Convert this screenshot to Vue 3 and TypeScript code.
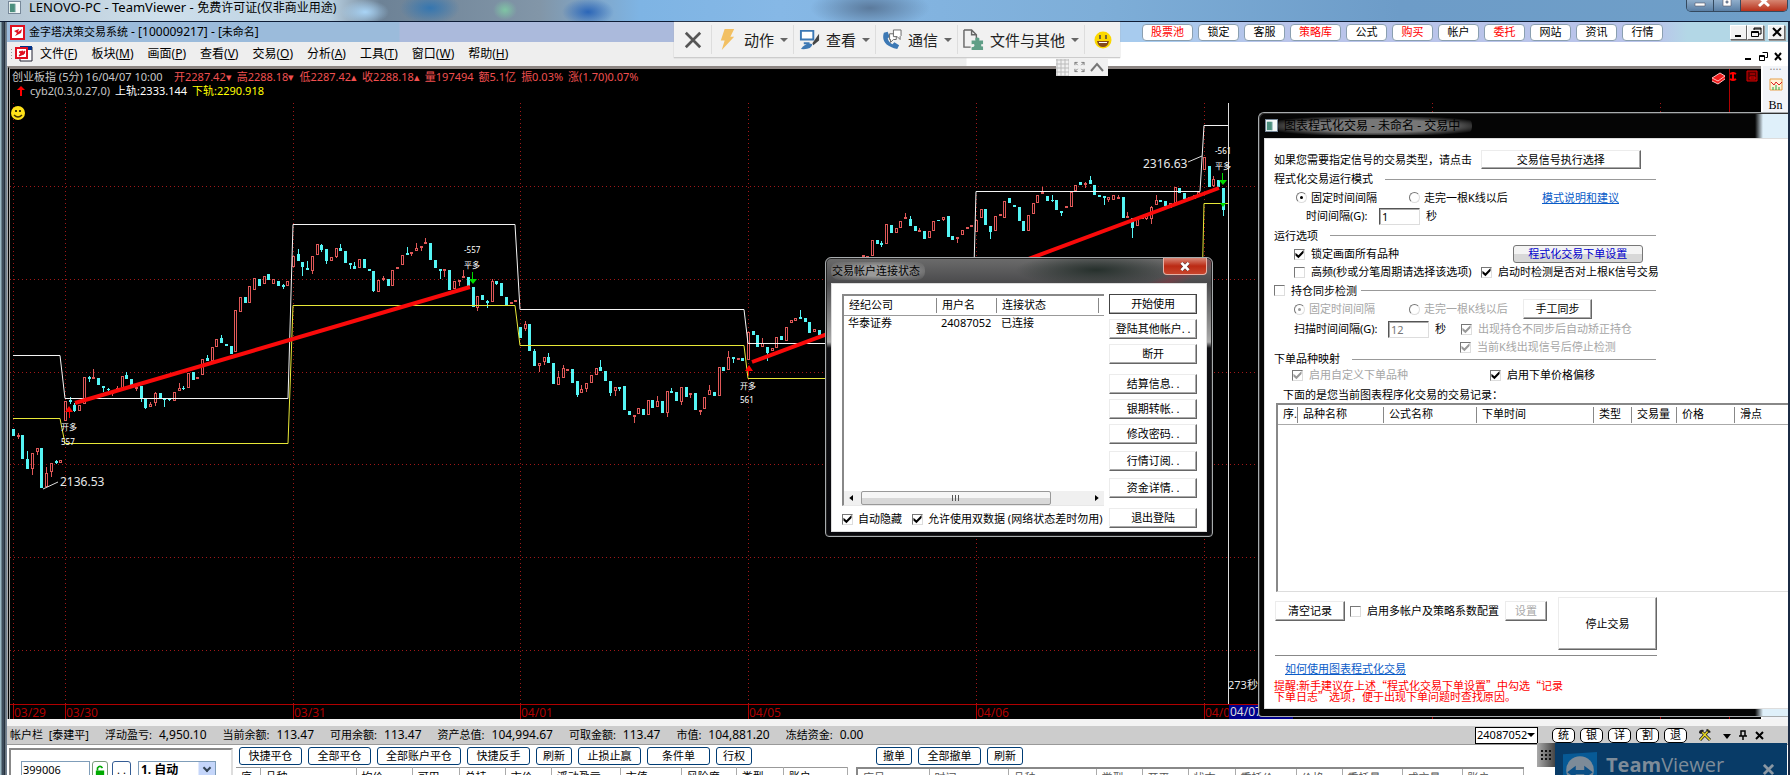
<script setup lang="ts">
import { ref } from 'vue'

const menus = [
  ['文件', 'F'], ['板块', 'M'], ['画面', 'P'], ['查看', 'V'], ['交易', 'O'],
  ['分析', 'A'], ['工具', 'T'], ['窗口', 'W'], ['帮助', 'H'],
]

const quickLinks = [
  { text: '股票池', hot: true }, { text: '锁定' }, { text: '客服' }, { text: '策略库', hot: true },
  { text: '公式' }, { text: '购买', hot: true }, { text: '帐户' }, { text: '委托', hot: true },
  { text: '网站' }, { text: '资讯' }, { text: '行情' },
]

const quotes = ['开2287.42▾', '高2288.18▾', '低2287.42▴', '收2288.18▴', '量197494', '额5.1亿', '振0.03%', '涨(1.70)0.07%']

const funds = [
  ['浮动盈亏:', '4,950.10'], ['当前余额:', '113.47'], ['可用余额:', '113.47'], ['资产总值:', '104,994.67'],
  ['可取金额:', '113.47'], ['市值:', '104,881.20'], ['冻结资金:', '0.00'],
]

const orderButtons = ['快捷平仓', '全部平仓', '全部账户平仓', '快捷反手', '刷新', '止损止赢', '条件单', '行权']
const positionCols = [
  ['序', 24], ['品种', 96], ['均价', 56], ['可用', 47], ['总持', 46], ['市价', 46],
  ['浮动盈亏', 69], ['市值', 61], ['风险度', 55], ['类型', 47], ['账户', 64],
] as [string, number][]
const orderCols = [
  ['序号', 72], ['时间', 79], ['品种', 88], ['类型', 46], ['开平', 46], ['状态', 47],
  ['委托价', 61], ['价格', 46], ['委托量', 60], ['成交量', 60], ['账户', 61],
] as [string, number][]

const recordCols = [
  ['序.', 20], ['品种名称', 86], ['公式名称', 93], ['下单时间', 117],
  ['类型', 38], ['交易量', 45], ['价格', 58], ['滑点', 55],
] as [string, number][]

const accountButtons = [
  { text: '开始使用', gap: 'none', main: true }, { text: '登陆其他帐户. .', gap: 'near' }, { text: '断开', gap: 'near' },
  { text: '结算信息. .', gap: 'far' }, { text: '银期转帐. .', gap: 'near' }, { text: '修改密码. .', gap: 'near' },
  { text: '行情订阅. .', gap: 'mid' }, { text: '资金详情. .', gap: 'mid' }, { text: '退出登陆', gap: 'far' },
]

const runMode = ref('fixed')
const syncMode = ref('fixed')
const interval = ref('1')
const scanInterval = ref('12')
const code = ref('399006')

interface Candle { x: number; up: boolean; top: number; bottom: number; high: number; low: number }

/* Each entry: u|d (rise or fall), body top, body bottom, and optionally wick top, wick bottom. */
const sessions: { x: number; from?: number; bars: string }[] = [
  { x: 13, bars: 'd 429 436,u 435 437 433 439,d 435 459,d 459 469 451 469,u 453 469 453 475,u 448 452 448 455,d 448 488,u 473 487 467 487,u 463 472 463 477,d 461 463 460 464,u 460 463' },
  { x: 65, bars: 'u 401 421,d 400 402 397 404,d 405 411 403 412,u 405 411,u 377 404,d 377 379 376 382,u 377 379 369 379,d 378 385,d 386 388 386 392,d 389 390 388 391,u 391 394 391 396,u 388 390 386 392,u 376 388,d 375 379 372 379,d 379 385,u 387 389 386 391,d 386 398 386 402,d 398 408 398 409,u 404 407 402 407,u 393 403 392 406,d 393 399,d 399 400 398 407,d 399 400 399 401,u 392 401,u 388 391 383 391,d 388 389 386 390,u 373 388,d 372 380,u 377 379,u 359 375,d 358 361 355 361,u 347 361,u 339 347,d 338 343 335 343,d 344 346,d 346 354,u 310 352,u 297 312,d 297 303,u 286 303,u 278 290,d 279 286,u 276 284,d 274 280,u 279 284,d 281 286,d 285 287 284 289,u 281 286' },
  { x: 293, bars: 'u 256 267,d 254 261 249 261,d 262 267 262 276,d 268 270 261 270,u 256 271 256 274,u 244 255,d 245 250 244 252,d 249 261 249 264,u 257 261,u 248 257 248 258,d 248 251 244 251,d 251 263,d 263 265 263 269,d 266 269 262 269,u 259 268,d 259 268,d 269 271,d 271 291 271 292,u 280 292,u 278 280 276 281,d 279 286,u 270 286,u 267 268,u 255 265,d 253 255 247 255,u 252 253 252 256,u 248 251 243 251,u 246 248 246 251,u 242 244 238 244,d 243 260,d 260 268,d 269 271 269 279,u 269 271 269 277,d 270 290,u 281 289,u 280 282 280 286,u 276 278 270 278,d 277 286,d 287 307,u 296 308 296 311,d 295 300,d 301 303 300 308,u 281 302 279 302,d 281 284 281 285,d 283 296,d 297 305,u 302 304,u 300 302' },
  { x: 520, bars: 'd 327 338,u 324 329 321 331,d 324 351,d 351 366 349 366,u 363 366 363 372,u 357 362 357 365,d 357 363 353 363,d 363 384,u 377 385 371 385,u 368 378 365 378,u 369 370,d 369 383,d 381 395 381 397,u 389 393 385 393,u 383 389 383 392,u 375 383,u 368 375,d 367 371 360 371,d 371 381,d 381 393 381 396,u 387 391 387 396,d 387 389 387 391,d 386 410,d 411 415,u 415 416 415 423,u 408 414,d 409 415,u 400 415,d 400 408,u 401 407 396 407,d 401 413,u 391 413 391 417,d 391 393 388 393,d 392 401,u 387 402 387 405,d 387 397,u 393 395 393 398,d 393 410,u 410 411 410 415,u 397 409,u 390 395 385 395,d 392 396,u 367 396,d 367 371,u 357 370 351 370,d 357 359 357 363,u 358 359,d 358 361' },
  { x: 748, bars: 'u 332 360,d 331 335,d 335 347,u 343 347 338 347,d 347 353 347 361,u 348 351,u 337 348,d 336 340,u 327 341,u 320 323,u 318 321,d 317 319 310 319,d 318 322,d 322 333,u 329 332,d 330 335' },
  { x: 749, from: 24, bars: 'u 255 257,u 256 258,u 240 256,d 240 244,d 243 245 241 247,u 224 244,d 225 233,u 228 233,u 221 228,u 217 219 213 219,d 219 226 216 226,d 226 231,u 230 232 228 232,d 231 239,u 231 238,u 221 231,d 220 221,u 217 220 217 221,d 216 237,d 236 240,u 237 239 237 243,u 230 235,u 227 229,u 225 226' },
  { x: 976, bars: 'u 220 232,u 209 218,d 209 225,d 226 232 226 239,u 216 231,u 214 216,u 201 218,d 198 203,d 205 207,d 207 221,d 221 231,u 215 231,u 203 214,u 195 203,u 192 194 187 194,d 196 201,d 200 201 195 202,d 200 210,d 211 213 211 216,u 206 208,u 192 207,u 185 191,d 182 185,u 183 184 182 188,d 180 184 176 184,d 185 195,d 195 197,d 196 198 196 205,u 197 200 197 202,u 195 200,u 197 199 195 199,d 197 218,u 216 218 212 218,d 218 228 218 238,u 219 226,u 216 219,u 216 219 213 220,u 207 219 206 224,u 200 205 195 205,d 200 202,d 201 206,u 203 208,u 187 203,d 188 193,d 193 199,u 197 200,u 195 199,u 192 195' },
  { x: 1204, bars: 'u 157 170,d 166 187,u 179 186 176 187,d 180 187,d 188 210 188 216' },
]

const candles: Candle[] = sessions.flatMap(({ x, from = 0, bars }) =>
  bars.split(',').map((bar, i) => {
    const [kind, ...n] = bar.split(' ')
    const [top, bottom, high = top, low = bottom] = n.map(Number)
    return { x: Math.round(x + (from + i) * 4.73), up: kind === 'u', top, bottom, high, low }
  }),
)

const days = [
  { x: 13, text: '03/29' }, { x: 65, text: '03/30' }, { x: 293, text: '03/31' }, { x: 520, text: '04/01' },
  { x: 748, text: '04/05' }, { x: 976, text: '04/06' }, { x: 1204, text: '04/07' }, { x: 1432, text: '04/08' }, { x: 1660, text: '04/11' },
]
const levels = [186, 279, 372, 464, 557, 650]
</script>

<template>
  <div class="desktop">
    <header class="remote-title">
      <svg class="win-icon" viewBox="0 0 13 13"><path d="M0 0h13v13H0z" fill="#f4f8f8" /><path d="M1 2h6v10H1z" fill="#4b8f7d" /><path d="M7 2h1v10H7z" fill="#9bb" /></svg>
      <span class="remote-name"><span class="host">LENOVO-PC - TeamViewer - </span>免费许可证(仅非商业用途)</span>
      <div class="aero-buttons">
        <button type="button" aria-label="最小化"><svg viewBox="0 0 12 8"><path d="M1 3h10v3H1z" fill="#fff" stroke="#556" stroke-width=".6" /></svg></button>
        <button type="button" aria-label="最大化"><svg viewBox="0 0 12 8"><path d="M2-3h8v9H2zM5 1h2v2H5z" fill="#fff" fill-rule="evenodd" stroke="#556" stroke-width=".6" /></svg></button>
        <button type="button" class="aero-close" aria-label="关闭"><svg viewBox="0 0 12 8"><path d="M1-3l10 9M11-3L1 6" stroke="#fff" stroke-width="3" /></svg></button>
      </div>
    </header>

    <div class="workspace">
      <div class="app-title">
        <svg class="app-icon" viewBox="0 0 15 15"><path d="M1 1h13v13H1z" fill="#fff" stroke="#e01020" stroke-width="2" /><path d="M4 6l5-2-1 3 4-3-1 4-6 3 2-3z" fill="#e01020" /></svg>
        <span>金字塔决策交易系统<span class="latin"> - [100009217] - [</span>未命名<span class="latin">]</span></span>
        <nav class="quick">
          <button v-for="q in quickLinks" :key="q.text" type="button" :class="{ hot: q.hot, long: q.text.length > 2 }">{{ q.text }}</button>
        </nav>
        <div class="classic-buttons">
          <button type="button" aria-label="最小化"><svg viewBox="0 0 12 11"><path d="M2 8h6v2H2z" /></svg></button>
          <button type="button" aria-label="还原"><svg viewBox="0 0 12 11"><path d="M4 1h7v6H9M4 1v2M4 2h7M1.500 4.500h7v5h-7zM1.500 5.500h7" fill="none" stroke="#000" /></svg></button>
          <button type="button" class="gap" aria-label="关闭"><svg viewBox="0 0 12 11"><path d="M2 1l8 8M10 1L2 9" stroke="#000" stroke-width="2" /></svg></button>
        </div>
      </div>

      <div class="menubar">
        <svg class="mdi-icon" viewBox="0 0 22 16"><path d="M0 3h1v1H0zM0 6h1v1H0zM0 9h1v1H0zM0 12h1v1H0z" fill="#999" /><path d="M9 1h12v14H9z" fill="#fff" stroke="#223" /><path d="M9 0h12v4H9z" fill="#003087" /><path d="M5 2h11v10H5z" fill="#fff" stroke="#e01020" stroke-width="2" /><path d="M8 6l4-1-1 2 3-2-1 3-5 2 2-3z" fill="#e01020" stroke="#e01020" /></svg>
        <button v-for="m in menus" :key="m[1]" type="button" class="menu">{{ m[0] }}(<u>{{ m[1] }}</u>)</button>
        <div class="mdi-buttons">
          <button type="button" aria-label="最小化"><svg viewBox="0 0 9 9"><path d="M1 6h6v2H1z" /></svg></button>
          <button type="button" aria-label="还原"><svg viewBox="0 0 9 9"><path d="M3.500.5h5v5h-2M.5 3.500h5v5h-5zM.5 4.500h5" fill="none" stroke="#000" /></svg></button>
          <button type="button" aria-label="关闭"><svg viewBox="0 0 9 9"><path d="M1 1l6 7M7 1L1 8" stroke="#000" stroke-width="2" /></svg></button>
        </div>
      </div>

      <div class="stage">
        <section class="chart">
          <svg class="plot" width="100%" height="100%">
            <g transform="translate(-10 -69)">
              <g class="grid">
                <line v-for="d in days" :key="d.x" :x1="d.x + 0.5" :x2="d.x + 0.5" y1="103" y2="704" />
                <line v-for="y in levels" :key="y" x1="10" x2="1729" :y1="y + 0.5" :y2="y + 0.5" />
              </g>
              <path class="axis" d="M10 704.500H1763M1729.500 69V719" />
              <g class="dates">
                <template v-for="d in days" :key="d.x">
                  <path :d="`M${d.x + 0.5} 704V719`" />
                  <text :x="d.x + 1" y="717">{{ d.text }}</text>
                </template>
                <text x="1733" y="717">1:05</text>
              </g>
              <g v-for="(c, i) in candles" :key="i" :class="c.up ? 'rise' : 'fall'">
                <line :x1="c.x + 0.5" :x2="c.x + 0.5" :y1="c.high" :y2="c.low" />
                <rect :x="c.up ? c.x - 0.5 : c.x - 1" :y="c.up ? c.top + 0.5 : c.top" :width="c.up ? 2 : 3" :height="Math.max(1, c.bottom - c.top - (c.up ? 1 : 0))" />
              </g>
              <path class="upper" d="M13 355.500H60L65 398.500H288L293 224.500H515L520 309.500H744L748 343.500H972L976 191.500H1200L1204 125.500H1228" />
              <path class="lower" d="M13 418.500H60L65 443.500H288L293 305.500H515L520 345.500H744L748 378.500H972L1200 378L1204 203.500H1228" />
              <path class="trend" d="M75 403L470 287M752 362L1219 188" />
              <path d="M69 406l-4 6h8zM69.500 411v7M749 365l-4 6h8z" fill="#f00" />
              <path d="M69.500 411v7M748.500 371v4" stroke="#f00" />
              <path d="M473 284l-4-5h8zM1223 185l-4-5h8zM1223 207l-3-4h6z" fill="#0d0" />
              <path d="M472.500 279v-7M1222.500 180v-7" stroke="#0d0" />
              <path class="leader" d="M43 489l15-7M1188 162l14-6" />
              <path class="cursor" d="M1228.500 103V704" />
              <g class="tags">
                <text x="61" y="430">开多</text><text x="61" y="445">557</text>
                <text x="464" y="253">-557</text><text x="464" y="268">平多</text>
                <text x="740" y="389">开多</text><text x="740" y="403">561</text>
                <text x="1215" y="154">-561</text><text x="1215" y="169">平多</text>
              </g>
              <g class="values">
                <text x="60" y="486">2136.53</text><text x="1143" y="168">2316.63</text><text x="1228" y="689" class="secs">273秒</text>
              </g>
              <path d="M1229 705h64v14h-64z" fill="#00008c" />
              <text x="1230" y="716" class="cursor-date">04/07</text>
              <g><circle cx="18" cy="113" r="7" fill="#ffe21a" /><circle cx="16" cy="111" r="1" /><circle cx="20" cy="111" r="1" /><path d="M14 115q4 4 8 0" fill="none" stroke="#430" stroke-width="1.500" /></g>
              <path d="M1712 78l8-5 5 3v3l-7 5-6-3z" fill="#f21c1c" /><path d="M1712 78l8-5 5 3-7 5zM1712 81l6 3 7-5" fill="none" stroke="#fbb" />
              <path d="M1733 72v9M1730 74q3-2 6 0M1730 79q3 2 6 0" fill="none" stroke="#f00" stroke-width="2" />
              <path d="M1747 71h10v10h-10zM1750 74h5M1750 77h5v2h-5z" fill="#500" stroke="#d00" />
            </g>
          </svg>
          <p class="quote-line"><span class="grey lead">创业板指 (5分) 16/04/07 10:00</span><span v-for="q in quotes" :key="q" class="red">{{ q }}</span></p>
          <p class="quote-line second">
            <svg viewBox="0 0 8 10"><path d="M4 0l4 4H5v6H3V4H0z" fill="#f00" /></svg>
            <span class="grey">cyb2(0.3,0.27,0)</span><span class="white">上轨:2333.144</span><span class="yellow">下轨:2290.918</span>
          </p>
        </section>
        <aside class="sidebar">
          <span class="dots">....</span>
          <svg viewBox="0 0 14 14"><path d="M1 1h12v11H1z" fill="#fff3d8" stroke="#e8a04a" /><path d="M2 4l3 3 2-3 3 3 3-3" fill="none" stroke="#d22" /><path d="M4 12V9M7 12V7M10 12V9" stroke="#2a4" /></svg>
          <span class="bn">Bn</span>
        </aside>
      </div>

      <div class="account-bar">
        <span class="owner">帐户栏&nbsp; [泰建平]</span>
        <span v-for="f in funds" :key="f[0]" class="fund"><span>{{ f[0] }}</span><span class="latin">{{ f[1] }}</span></span>
        <div class="account-tools">
          <span class="drop account-drop"><select class="account-select" aria-label="资金帐号"><option>24087052</option></select></span>
          <button v-for="t in ['统', '银', '详', '割', '退']" :key="t" type="button" class="pill">{{ t }}</button>
          <svg class="tools" viewBox="0 0 14 14"><path d="M2 12L11 2M3 3l9 9" stroke="#222" stroke-width="3" /><path d="M2 12L11 2M3 3l9 9" stroke="#e8d820" stroke-width="1.500" /><path d="M1 5q0-4 5-3L3 6zM9 1l4 3-2 1-3-3z" fill="#222" /></svg>
          <svg class="small" viewBox="0 0 10 10"><path d="M1 4h8L5 9z" /></svg>
          <svg class="small" viewBox="0 0 10 10"><path d="M3 1h4v5H3zM1 6h8M5 6v4" fill="none" stroke="#000" stroke-width="1.500" /></svg>
          <svg class="small" viewBox="0 0 10 10"><path d="M2 2l7 7M9 2L2 9" stroke="#000" stroke-width="2" /></svg>
        </div>
      </div>

      <div class="trade">
        <form class="ticket">
          <input v-model="code" class="code" aria-label="代码">
          <button type="button" class="lock" aria-label="锁定"><svg viewBox="0 0 12 14"><path d="M3 7V4q3-4 6 0" fill="none" stroke="#0a0" stroke-width="2" /><path d="M1 7h10v7H1z" fill="#0a0" /></svg></button>
          <button type="button" class="more">. .</button>
          <span class="drop mode-drop"><select class="mode" aria-label="开平方式"><option>1. 自动</option></select></span>
        </form>
        <div class="pane">
          <div class="pane-buttons"><button v-for="b in orderButtons" :key="b" type="button" class="xp" :class="{ wide: b.length > 2 }">{{ b }}</button></div>
          <table class="list"><colgroup><col v-for="c in positionCols" :key="c[0]" :style="{ width: c[1] + 'px' }"></colgroup>
            <thead><tr><th v-for="c in positionCols" :key="c[0]">{{ c[0] }}</th></tr></thead></table>
        </div>
        <div class="pane orders">
          <div class="pane-buttons"><button v-for="b in ['撤单', '全部撤单', '刷新']" :key="b" type="button" class="xp" :class="{ wide: b.length > 2 }">{{ b }}</button></div>
          <table class="list sunk"><colgroup><col v-for="c in orderCols" :key="c[0]" :style="{ width: c[1] + 'px' }"></colgroup>
            <thead><tr><th v-for="c in orderCols" :key="c[0]">{{ c[0] }}</th></tr></thead></table>
        </div>
      </div>
    </div>

    <div class="tv-bar">
      <div class="tv-main">
        <button type="button" class="tv-x" aria-label="关闭连接"><svg viewBox="0 0 20 20"><path d="M2 2l16 16M18 2L2 18" stroke="#555" stroke-width="3" /></svg></button>
        <button type="button"><svg viewBox="0 0 20 22"><path d="M7 0h10l-4 8h4L4 22l3-10H3z" fill="#f2c063" /></svg>动作<i /></button>
        <button type="button"><svg viewBox="0 0 22 22"><path d="M2 2h13v9H2zM5 15h6" fill="#fff" stroke="#3c78b4" stroke-width="2" /><path d="M21 5v7l-6 5-1-2z" fill="#444" /><path d="M2 21q6-8 12-5-1 6-12 5z" fill="#3c78b4" /></svg>查看<i /></button>
        <button type="button"><svg viewBox="0 0 22 22"><path d="M3 4q-4 13 14 17l2-4-5-3-2 2q-4-2-5-6l2-2-2-5z" fill="#3c78b4" /><path d="M13 1h8v6l-1 1v3l-3-3h-4zM9 5h4M9 5v6h1v3l3-3h3V8" fill="#fff" stroke="#666" /></svg>通信<i /></button>
        <button type="button" class="tv-files"><svg viewBox="0 0 22 22"><path d="M1 1h8l5 5v4M1 1v18h7M9 1v5h5" fill="none" stroke="#666" stroke-width="1.500" /><path d="M9 12h4q-1-3 2-3t2 3h4v4q-2-1-2 1t2 1v4H9v-3q3 0 3-2t-3-1z" fill="#5f9e87" /></svg>文件与其他<i /></button>
        <button type="button" class="smile" aria-label="反馈"><svg viewBox="0 0 18 18"><circle cx="9" cy="9" r="8.500" fill="#fbd800" /><path d="M6 4v4M12 4v4" stroke="#763" stroke-width="2" /><path d="M3 10h12q-1 6-6 6t-6-6z" fill="#854a1c" /><path d="M5 11h8v1H5z" fill="#fff" /></svg></button>
      </div>
      <div class="tv-tab">
        <svg class="tv-grid" viewBox="0 0 13 17"><path d="M0 1h13M0 5h13M0 9h13M0 13h13M0 17h13M1 0v17M5 0v17M9 0v17M13 0v17" stroke="#bbb" /></svg>
        <button type="button" aria-label="全屏"><svg viewBox="0 0 12 12"><path d="M1 4V1h3M8 1h3v3M11 8v3H8M4 11H1V8M1 1l3 3M11 1L8 4M11 11L8 8M1 11l3-3" fill="none" stroke="#777" /></svg></button>
        <button type="button" aria-label="收起"><svg class="up" viewBox="0 0 14 12"><path d="M1 10l6-7 6 7" fill="none" stroke="#777" stroke-width="2" /></svg></button>
      </div>
    </div>

    <section class="window account-window" aria-label="交易帐户连接状态">
      <header class="window-title"><span class="glow">交易帐户连接状态</span>
        <button type="button" class="close" aria-label="关闭"><svg viewBox="0 0 12 10"><path d="M2 1l8 8M10 1L2 9" stroke="#533" stroke-width="4" /><path d="M2 1l8 8M10 1L2 9" stroke="#fff" stroke-width="3" /></svg></button>
      </header>
      <div class="client account-client">
        <div class="account-left">
          <div class="account-list">
            <table>
              <colgroup><col class="c1"><col class="c2"><col class="c3"><col></colgroup>
              <thead><tr><th>经纪公司</th><th>用户名</th><th>连接状态</th><th class="rest" /></tr></thead>
              <tbody><tr><td>华泰证券</td><td>24087052</td><td>已连接</td><td /></tr></tbody>
            </table>
            <div class="scroll">
              <svg viewBox="0 0 6 8"><path d="M5 0v8L0 4z" /></svg><span class="thumb"><b /><b /><b /></span><svg viewBox="0 0 6 8"><path d="M1 0v8l5-4z" /></svg>
            </div>
          </div>
          <div class="checks">
            <label class="opt"><input type="checkbox" checked>自动隐藏</label>
            <label class="opt"><input type="checkbox" checked>允许使用双数据 (网络状态差时勿用)</label>
          </div>
        </div>
        <div class="account-actions">
          <button v-for="b in accountButtons" :key="b.text" type="button" class="btn" :class="[b.gap, { main: b.main }]">{{ b.text }}</button>
        </div>
      </div>
    </section>

    <section class="window program-window" aria-label="图表程式化交易">
      <header class="window-title">
        <svg class="win-icon" viewBox="0 0 13 13"><path d="M0 0h13v13H0z" fill="#f4f8f8" /><path d="M1 2h6v10H1z" fill="#4b8f7d" /><path d="M7 2h1v10H7z" fill="#9bb" /></svg>
        <span class="glow">图表程式化交易 - 未命名 - 交易中</span>
      </header>
      <div class="client program-client">
        <div class="form">
          <div class="row r-type"><span>如果您需要指定信号的交易类型，请点击</span><button type="button" class="btn">交易信号执行选择</button></div>
          <h3 class="row r-head"><span>程式化交易运行模式</span><hr></h3>
          <div class="row r-mode">
            <label class="opt"><input v-model="runMode" type="radio" name="run" value="fixed">固定时间间隔</label>
            <label class="opt"><input v-model="runMode" type="radio" name="run" value="bar">走完一根K线以后</label>
            <a href="#mode">模式说明和建议</a>
          </div>
          <div class="row r-interval"><label for="interval">时间间隔(G):</label><input id="interval" v-model="interval" class="field"><span>秒</span></div>
          <h3 class="row r-head"><span>运行选项</span><hr></h3>
          <div class="row r-lock"><label class="opt"><input type="checkbox" checked>锁定画面所有品种</label><button type="button" class="seven">程式化交易下单设置</button></div>
          <div class="row r-freq"><label class="opt"><input type="checkbox">高频(秒或分笔周期请选择该选项)</label><label class="opt"><input type="checkbox" checked>启动时检测是否对上根K信号交易</label></div>
          <div class="row r-head sync"><label class="opt"><input type="checkbox">持仓同步检测</label><hr></div>
          <div class="row r-mode dim">
            <label class="opt off"><input v-model="syncMode" type="radio" name="sync" value="fixed" disabled>固定时间间隔</label>
            <label class="opt off"><input v-model="syncMode" type="radio" name="sync" value="bar" disabled>走完一根K线以后</label>
            <button type="button" class="btn">手工同步</button>
          </div>
          <div class="row r-scan"><label for="scan">扫描时间间隔(G):</label><input id="scan" v-model="scanInterval" class="field" disabled><span>秒</span><label class="opt off"><input type="checkbox" checked disabled>出现持仓不同步后自动矫正持仓</label></div>
          <div class="row r-stop"><label class="opt off"><input type="checkbox" checked disabled>当前K线出现信号后停止检测</label></div>
          <h3 class="row r-head"><span>下单品种映射</span><hr></h3>
          <div class="row r-map"><label class="opt off"><input type="checkbox" checked disabled>启用自定义下单品种</label><label class="opt"><input type="checkbox" checked>启用下单价格偏移</label></div>
          <div class="row r-note">下面的是您当前图表程序化交易的交易记录：</div>
        </div>
        <div class="records">
          <table><colgroup><col v-for="c in recordCols" :key="c[0]" :style="{ width: c[1] + 'px' }"></colgroup>
            <thead><tr><th v-for="c in recordCols" :key="c[0]">{{ c[0] }}</th></tr></thead></table>
        </div>
        <div class="actions">
          <button type="button" class="btn clear">清空记录</button>
          <label class="opt multi"><input type="checkbox">启用多帐户及策略系数配置</label>
          <button type="button" class="btn setup" disabled>设置</button>
          <button type="button" class="btn stop">停止交易</button>
        </div>
        <footer class="hints">
          <a href="#help">如何使用图表程式化交易</a>
          <p>提醒:新手建议在上述“程式化交易下单设置”中勾选“记录<br>下单日志”选项，便于出现下单问题时查找原因。</p>
        </footer>
      </div>
    </section>

    <aside class="tv-panel">
      <span class="grip"><b v-for="n in 9" :key="n" /></span>
      <div class="tv-brand">
        <svg viewBox="0 0 32 32"><path d="M0 2l32-2v32H0z" fill="#075a96" /><circle cx="16" cy="17" r="13" fill="#7d8b98" /><path d="M4 19l8-6v4h8v-4l8 6-8 6v-4h-8v4z" fill="#0b4f86" /></svg>
        <span class="tv-name"><b>Team</b>Viewer</span>
        <button type="button" aria-label="关闭面板"><svg viewBox="0 0 12 12"><path d="M1 1l10 10M11 1L1 11" stroke="#8a97a3" stroke-width="3" /></svg></button>
      </div>
    </aside>
  </div>
</template>

<style>
body { background: #fff; }
</style>

<style scoped>
.desktop { position: relative; box-sizing: border-box; display: flex; flex-direction: column; height: 100vh; overflow: hidden; padding: 0 2px 0 7px; background: linear-gradient(90deg, #9ab8c4 0 1px, #3d4c59 2px, #3c4b5c 4px, #101820 5px, #c5d4dd 6px, #1b2b44 7px 100%); font: 11px/14px "Noto Sans", "Noto Sans CJK SC", sans-serif; color: #000; }
.desktop *, .desktop *::before, .desktop *::after { box-sizing: border-box; }
button, input, select { font: inherit; color: inherit; margin: 0; padding: 0; border-radius: 0; }
button { border: 0; background: none; white-space: nowrap; }
svg { display: block; flex: none; }
h3, p { margin: 0; font: inherit; }
table { border-collapse: collapse; table-layout: fixed; }
th, td { padding: 0; font-weight: normal; text-align: left; white-space: nowrap; }
.latin { font-size: 12px; white-space: pre; }

.remote-title { display: flex; align-items: center; height: 22px; flex: none; margin: 0 -2px 0 -7px; padding: 0 2px 7px 8px; gap: 8px; border-bottom: 1px solid #0d1c36; font-size: 12px; background:
  radial-gradient(ellipse 24px 12px at 365px 12px, #a9d4f6, transparent),
  radial-gradient(ellipse 30px 16px at 430px 8px, #3576b0, transparent),
  radial-gradient(ellipse 12px 10px at 505px 10px, #7fc4a4, transparent),
  radial-gradient(ellipse 26px 14px at 588px 12px, #2b66b8, transparent),
  radial-gradient(ellipse 60px 20px at 870px 8px, #5b7a9c, transparent),
  linear-gradient(90deg, #b5c6d3 0, #cfe0ec 160px, #b8cfe0 330px, #6d8296 380px, #8296a8 540px, #7eb4e4 640px, #86b8e6 780px, #7eaed8 1100px, #6d9cc8 1400px, #6f9fc8 100%); }
.win-icon { width: 13px; height: 13px; border: 1px solid #789; }
.host { font-size: 13px; white-space: pre; }
.aero-buttons { display: flex; align-self: flex-start; margin-left: auto; height: 12px; border: 1px solid #34495f; border-top: 0; border-radius: 0 0 5px 5px; overflow: hidden; }
.aero-buttons button { width: 27px; background: linear-gradient(#90aecb, #5a7fa5); border-right: 1px solid #34495f; display: grid; justify-items: center; }
.aero-buttons svg { width: 12px; height: 8px; }
.aero-buttons .aero-close { width: 46px; border: 0; background: linear-gradient(#d68672, #b8301a); }

.workspace { display: flex; flex-direction: column; flex: 1; min-height: 0; }
.app-title { display: flex; align-items: center; height: 20px; flex: none; padding-left: 3px; gap: 4px; background: linear-gradient(90deg, #9bbbdb 0 392px, #abbadc 393px 672px, #a7cbee 1110px 1150px, #b9c4ea 1270px 1650px, #b3d7e6 1680px 100%); }
.app-icon { width: 15px; height: 15px; }
.quick { display: flex; gap: 5px; margin-left: auto; }
.quick button { width: 41px; height: 17px; line-height: 14px; background: #fff; border: 1px solid #8a9fb0; border-radius: 4px; }
.quick .long { width: 51px; }
.quick .hot { color: #f00; }
.classic-buttons { display: flex; margin: 0 3px 0 63px; }
.classic-buttons button { display: grid; place-items: center; width: 17px; height: 15px; background: #f2f2f2; border: 1px solid; border-color: #fff #666 #666 #fff; box-shadow: 1px 1px #999; }
.classic-buttons .gap { margin-left: 4px; }
.classic-buttons svg { width: 12px; height: 11px; }

.menubar { display: flex; align-items: center; height: 24px; flex: none; padding-left: 4px; background: linear-gradient(90deg, #eee 0 959px, #fff 960px); }
.mdi-icon { width: 22px; height: 16px; }
.menu { padding: 0 7px; font-size: 12px; }
.mdi-buttons { display: flex; gap: 6px; margin-left: auto; padding: 4px 5px 0 0; }
.mdi-buttons svg { width: 9px; height: 9px; }

.stage { display: flex; flex: 1; min-height: 0; }
.chart { position: relative; flex: 1; min-width: 0; padding: 1px 0 0 2px; background: #000; border-top: 3px solid #8c8582; border-left: 3px double #aaa; }
.plot { position: absolute; inset: 0; }
.grid line { stroke: #a01818; stroke-dasharray: 1 3; }
.axis { fill: none; stroke: #b00000; }
.dates path { stroke: #b00000; }
.dates text { fill: #b00000; font-size: 12px; }
.rise line, .rise rect { stroke: #e05858; fill: #000; }
.fall line { stroke: #55f5f5; }
.fall rect { fill: #55f5f5; }
.upper, .lower { fill: none; stroke: #f4f4f4; }
.lower { stroke: #e8e838; }
.trend { stroke: #fa0a0a; stroke-width: 4; }
.leader { stroke: #ddd; fill: none; }
.cursor { stroke: #ddd; }
.tags text { fill: #fff; font-size: 8px; }
.values text { fill: #e8e8e8; font-size: 12px; }
.values .secs { font-size: 11px; }
.cursor-date { fill: #ddd; font-size: 12px; }
.quote-line { position: relative; display: flex; gap: 5px; height: 14px; font-size: 11px; white-space: nowrap; }
.lead { width: 157px; }
.second { padding-left: 5px; align-items: center; }
.second svg { width: 8px; height: 10px; }
.grey { color: #c8c8c8; }
.red { color: #f05050; }
.white { color: #fff; }
.yellow { color: #ff0; }
.sidebar { width: 27px; display: flex; flex-direction: column; align-items: center; background: #f2f4f8; border-left: 2px solid #fff; }
.sidebar svg { width: 14px; height: 14px; margin: 2px 0 6px; }
.dots { height: 10px; line-height: 0; color: #888; }
.bn { font-family: "Liberation Serif", serif; font-size: 12px; }

.account-bar { display: flex; align-items: center; flex: none; height: 26px; padding: 0 24px 0 3px; border-top: 7px solid #f3f3f3; border-bottom: 1px solid #999; background: #ccc; }
.owner { width: 95px; }
.fund { display: flex; gap: 7px; margin-right: 16px; }
.account-tools { display: flex; align-items: center; margin-left: auto; }
.drop { position: relative; display: block; }
.drop select { display: block; appearance: none; width: 100%; height: 100%; }
.drop::after { content: ""; position: absolute; right: 3px; top: 6px; border: 4px solid transparent; border-top-color: #000; border-bottom: 0; pointer-events: none; }
.account-drop { width: 63px; height: 17px; margin-right: 14px; }
.account-select { padding-left: 1px; border: 1px solid #000; background: #fff; }
.pill { width: 23px; height: 15px; line-height: 12px; margin-right: 5px; border: 1px solid #000; border-radius: 5px; background: #fff; }
.tools { width: 14px; height: 14px; margin: 0 4px 0 6px; }
.small { width: 10px; height: 10px; margin-left: 6px; }

.trade { display: flex; flex: none; height: 30px; background: #fff; }
.ticket { display: flex; flex: none; align-items: flex-start; width: 224px; height: 60px; margin: 3px 3px 0 2px; padding: 11px 0 0 10px; border: 2px solid #888; border-right-color: #ddd; background: #fff; }
.code { width: 69px; height: 17px; border: 1px solid #7f9db9; padding-left: 1px; }
.lock { display: grid; place-items: center; width: 16px; height: 18px; margin-left: 2px; border: 1px solid #7a9a7a; border-radius: 3px; }
.lock svg { width: 10px; height: 13px; }
.more { width: 19px; height: 18px; margin-left: 4px; border: 1px solid #345c94; border-radius: 3px; }
.mode-drop { width: 78px; height: 18px; margin-left: 7px; }
.mode { padding-left: 2px; border: 1px solid #7f9db9; font-size: 12px; font-weight: bold; background: linear-gradient(90deg, transparent 59px, #c5d6fa 60px), #fff; }
.mode-drop::after { width: 6px; height: 6px; right: 6px; top: 4px; border: solid #345; border-width: 0 2px 2px 0; transform: rotate(45deg); }
.pane { flex: none; width: 620px; padding-top: 2px; }
.pane-buttons { display: flex; gap: 6px; padding-left: 3px; height: 20px; }
.xp { height: 18px; line-height: 14px; padding: 0 6px; border: 1px solid #003c74; border-radius: 3px; background: #fff; }
.wide { min-width: 63px; padding: 0 8px; }
.list { width: 612px; border-top: 1px solid #999; }
.list th { height: 18px; padding-left: 5px; line-height: 14px; border-right: 1px solid #aaa; }
.orders { flex: 1; min-width: 0; overflow: hidden; }
.orders .pane-buttons { padding-left: 20px; }
.sunk { width: 667px; border-top: 2px solid #888; border-left: 2px solid #888; }
.sunk th { color: #555; }

.tv-bar { position: absolute; z-index: 3; left: 674px; top: 22px; width: 446px; display: flex; flex-direction: column; align-items: flex-end; }
.tv-main { display: flex; width: 100%; height: 36px; padding: 3px 0; background: #f1f1f1; border-bottom: 1px solid #ccc; box-shadow: 0 0 1px #aaa; }
.tv-main button { display: flex; align-items: center; justify-content: center; flex: none; width: 82px; gap: 6px; border-left: 1px solid #ddd; font-size: 15px; color: #222; }
.tv-main .tv-x { width: 37px; border: 0; }
.tv-main .tv-files { width: 127px; }
.tv-main .smile { width: 36px; }
.tv-main svg { width: 21px; height: 21px; }
.tv-main .tv-x svg, .tv-main .smile svg { width: 18px; height: 18px; }
.tv-main i { border: 4px solid transparent; border-top-color: #666; border-bottom: 0; }
.tv-tab { display: flex; align-items: center; gap: 5px; width: 52px; height: 18px; margin-right: 12px; background: #f1f1f1; }
.tv-grid { width: 13px; height: 17px; }
.tv-tab button svg { width: 11px; height: 12px; }
.tv-tab button .up { width: 14px; }

.window { position: absolute; border: 1px solid #a8acae; border-radius: 6px 6px 4px 4px; display: flex; flex-direction: column; }
.window-title { display: flex; align-items: center; height: 25px; flex: none; gap: 6px; }
.client { flex: 1; background: #fff; border: 1px solid #ddd; }
.account-window { z-index: 4; left: 825px; top: 257px; width: 388px; height: 280px; padding: 0 5px 5px; box-shadow: inset 0 0 0 1px #222; background: radial-gradient(ellipse 80px 16px at 270px 12px, #26302c, transparent), linear-gradient(155deg, transparent 158px, #8c344088 166px, transparent 174px) 0 0 / 100% 25px no-repeat, linear-gradient(180deg, #6c6c6c 0, #4a4a4c 25px, #aaa 84px, #101014 90px, #08080c 100%); }
.glow { color: #000; padding: 2px 5px; border-radius: 8px; }
.account-window .glow { padding-left: 1px; background: radial-gradient(ellipse, #9a9a9a 40%, #8888 70%, transparent); }
.close { display: grid; place-items: center; align-self: flex-start; width: 44px; height: 17px; margin-left: auto; border: 1px solid #e8b0a4; border-top: 0; border-radius: 0 0 4px 4px; background: linear-gradient(#d98878, #bb2a14 50%, #c8452c); }
.close svg { width: 12px; height: 9px; }
.account-client { display: flex; justify-content: space-between; padding: 10px 9px 3px 10px; }
.account-left { width: 268px; }
.account-list { display: flex; flex-direction: column; justify-content: space-between; width: 262px; height: 212px; border-top: 2px solid #888; border-left: 2px solid #888; border-bottom: 1px solid #e8e8e8; }
.account-list table { width: 100%; }
.c1 { width: 93px; } .c2 { width: 60px; } .c3 { width: 102px; }
.account-list th { position: relative; height: 19px; padding-left: 5px; border-bottom: 1px solid #999; }
.account-list th:not(.rest)::after { content: ""; position: absolute; right: 0; top: 2px; width: 1px; height: 15px; background: #888; }
.account-list td { height: 16px; padding-left: 4px; }
.scroll { display: flex; align-items: center; height: 14px; padding: 0 5px; background: #f0f0f0; }
.scroll svg { width: 5px; height: 6px; }
.thumb { display: flex; justify-content: center; align-items: center; gap: 1px; width: 190px; height: 14px; margin: 0 auto 0 7px; border: 1px solid #999; border-radius: 2px; background: linear-gradient(#f6f6f6 50%, #d8d8d8 51%); }
.thumb b { width: 2px; height: 6px; border-left: 1px solid #555; }
.checks { display: flex; gap: 10px; padding-top: 6px; }
.checks .opt { gap: 5px; }
.account-actions { display: flex; flex-direction: column; width: 88px; }
.btn { height: 20px; line-height: 16px; background: #fff; border: 1px solid; border-color: #ececec #666 #666 #ececec; box-shadow: inset -1px -1px #aaa; }
.btn:disabled { color: #aaa; }
.main { border-color: #444; }
.near { margin-top: 5px; } .mid { margin-top: 7px; } .far { margin-top: 10px; }

.opt { display: flex; align-items: center; gap: 6px; white-space: nowrap; }
.opt input { appearance: none; position: relative; width: 11px; height: 11px; flex: none; background: #fff; border: 1px solid; border-color: #777 #ddd #ddd #777; }
.opt input[type="checkbox"]:checked::before { content: ""; position: absolute; inset: 0; background: #000; clip-path: polygon(5% 35%, 38% 65%, 95% 5%, 95% 40%, 38% 98%, 5% 68%); }
.opt input[type="radio"] { border-radius: 50%; margin-right: -2px; }
.opt input[type="radio"]:checked::before { content: ""; position: absolute; left: 3px; top: 3px; width: 3px; height: 3px; border-radius: 50%; background: #000; }
.off { color: #a6a6a6; }
.opt input:disabled:checked::before { background: #999 !important; }

.program-window { z-index: 5; right: 2px; top: 112px; width: 530px; height: 605px; padding: 0 0 7px 5px; border-right: 0; border-radius: 6px 0 0 4px; box-shadow: inset 1px 1px #333; background: linear-gradient(90deg, transparent 496px, #dff0fa 504px), #050505; }
.program-window .window-title { padding-left: 1px; gap: 0; }
.program-window .glow { padding: 2px 12px 2px 6px; background: radial-gradient(ellipse, #777 50%, #666a 65%, transparent 85%); font-size: 12px; }
.program-client { padding: 11px 0 0 9px; border-right: 0; }
.form { display: grid; grid-template-rows: 19px 20px 17px 20px 19px 18px 18px 19px 18px 22px 14px 10px 22px 17px; width: 384px; }
.row { display: flex; align-items: center; white-space: nowrap; }
.r-type { justify-content: space-between; padding-right: 18px; }
.r-type .btn { width: 160px; height: 19px; }
.r-head { gap: 12px; }
.r-head hr { flex: 1; margin: 0 3px 0 0; border: 0; border-top: 1px solid #999; }
.sync { gap: 4px; }
.r-mode { padding-left: 22px; }
.r-mode .opt { width: 113px; }
.r-mode .opt + .opt { width: 133px; }
a { color: #0a5cc8; text-decoration: underline; }
.dim { padding-left: 20px; }
.dim .opt:first-child { width: 115px; }
.dim .opt + .opt { width: 114px; }
.dim .btn { width: 69px; }
.field { width: 41px; height: 17px; padding-left: 2px; border: 1px solid; border-color: #555 #ddd #ddd #555; box-shadow: inset 1px 1px #aaa; background: #fff; }
.field:disabled { color: #777; }
.r-interval { padding-left: 32px; }
.r-interval label { width: 73px; }
.r-interval .field, .r-scan .field { margin-right: 6px; }
.r-lock { justify-content: space-between; padding: 0 16px 0 20px; }
.seven { width: 130px; height: 18px; line-height: 14px; color: #00c; border: 1px solid #777; border-radius: 3px; background: linear-gradient(#f4f4f4 50%, #d8d8d8 51%); }
.r-freq { padding-left: 20px; }
.r-freq .opt:first-child { width: 187px; }
.r-scan { padding-left: 20px; }
.r-scan > label:first-child { width: 94px; }
.r-scan .opt { margin-left: 15px; }
.r-stop { padding-left: 186px; }
.r-map { padding-left: 18px; }
.r-map .opt:first-child { width: 198px; }
.r-note { padding-left: 9px; }
.records { height: 189px; margin-left: 2px; border-top: 2px solid #888; border-left: 2px solid #888; border-bottom: 1px solid #ddd; overflow: hidden; }
.records table { width: 512px; }
.records th { position: relative; height: 19px; padding-left: 5px; border-bottom: 1px solid #aaa; }
.records th:not(:last-child)::after { content: ""; position: absolute; right: 0; top: 2px; width: 1px; height: 16px; background: #888; }
.actions { display: flex; align-items: flex-start; width: 382px; height: 64px; margin-left: 1px; padding-top: 5px; border-bottom: 1px solid #888; }
.clear { width: 70px; margin-top: 4px; }
.multi { height: 20px; margin: 4px 6px 0 5px; }
.setup { width: 42px; margin-top: 4px; }
.stop { width: 99px; height: 53px; margin-left: auto; }
.hints { padding-top: 5px; font-family: "Noto Sans CJK SC", sans-serif; }
.hints a { margin-left: 11px; }
.hints p { margin-top: 5px; line-height: 11px; color: #f00; white-space: nowrap; }

.tv-panel { position: absolute; z-index: 6; right: 3px; bottom: 0; display: flex; align-items: flex-start; height: 32px; }
.grip { display: grid; grid-template-columns: repeat(3, 2px); gap: 2px; place-content: center; width: 18px; height: 24px; background: linear-gradient(90deg, #aaa, #444); }
.grip b { width: 2px; height: 2px; background: #111; }
.tv-brand { display: flex; align-items: flex-start; width: 232px; height: 32px; padding: 9px 13px 0 8px; background: #083b67; color: #7e8c99; font: 20px/26px "Open Sans", sans-serif; }
.tv-brand > svg { width: 34px; height: 34px; margin-right: 9px; }
.tv-brand button { margin: 12px 0 0 auto; }
.tv-brand button svg { width: 11px; height: 11px; }
</style>
